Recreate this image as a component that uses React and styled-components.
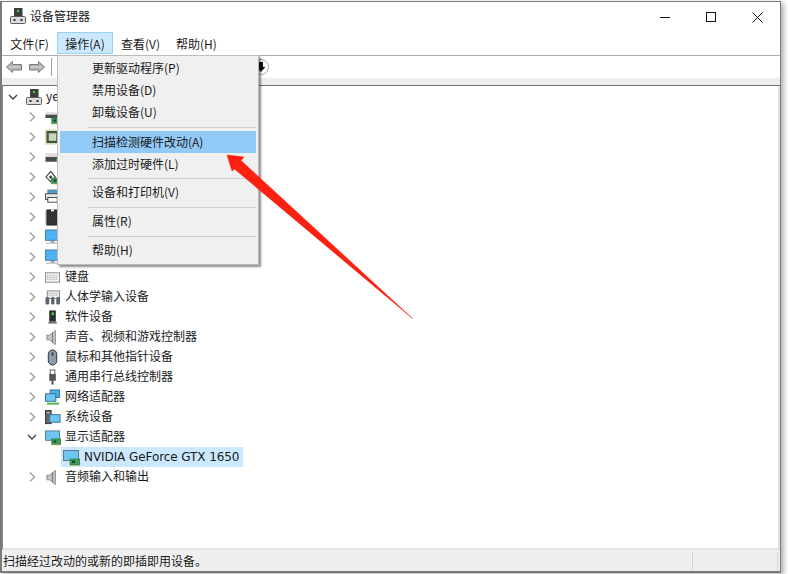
import React from 'react';
import styled, { createGlobalStyle } from 'styled-components';

const GlobalStyle = createGlobalStyle`
  html, body {
    margin: 0;
    background: #fff;
    overflow: hidden;
  }
  body {
    font-family: "Liberation Sans", "Noto Sans CJK SC", sans-serif;
    font-size: 12px;
    color: #1a1a1a;
  }
`;

const UI_FONT = `"Noto Sans CJK SC", "Liberation Sans", sans-serif`;

const TREE = [
  { icon: 'Scanner', label: '' },
  { icon: 'Chip', label: '' },
  { icon: 'Drive', label: '' },
  { icon: 'Sata', label: '' },
  { icon: 'Printer', label: '' },
  { icon: 'Mem', label: '' },
  { icon: 'Monitor', label: '' },
  { icon: 'Monitor', label: '' },
  { icon: 'Keyboard', label: '键盘' },
  { icon: 'Hid', label: '人体学输入设备' },
  { icon: 'Soft', label: '软件设备' },
  { icon: 'Speaker', label: '声音、视频和游戏控制器' },
  { icon: 'Mouse', label: '鼠标和其他指针设备' },
  { icon: 'Usb', label: '通用串行总线控制器' },
  { icon: 'Net', label: '网络适配器' },
  { icon: 'System', label: '系统设备' },
  { icon: 'Display', label: '显示适配器', open: true },
];

const Page = styled.div`
  width: 788px;
  height: 574px;
  background: #fff;
  padding-top: 1px;
  box-sizing: border-box;
`;

const Win = styled.div`
  width: 781px;
  height: 572px;
  box-sizing: border-box;
  border: 1px solid #7a7a7a;
  border-left-width: 2px;
  border-bottom-width: 2px;
  background: #fff;
  display: flex;
  flex-direction: column;
  position: relative;
  box-shadow: 3px 2px 5px rgba(0, 0, 0, 0.3);
`;

const TitleBar = styled.div`
  height: 30px;
  display: flex;
  align-items: center;
  padding-left: 8px;
  gap: 4px;
  font-family: ${UI_FONT};
  font-size: 12px;
  flex: none;
`;

const TitleIcon = styled.div`
  display: flex;
  margin-bottom: 2px;
`;

const TitleText = styled.span`
  flex: 1;
  padding-bottom: 3px;
`;

const Controls = styled.div`
  display: flex;
  align-items: center;
`;

const Control = styled.div`
  width: 46px;
  height: 30px;
  display: flex;
  align-items: center;
  justify-content: center;
`;

const MenuBar = styled.div`
  height: 23px;
  display: flex;
  align-items: flex-start;
  flex: none;
  border-bottom: 1px solid #ababab;
  font-family: ${UI_FONT};
  font-size: 12px;
`;

const MenuTitle = styled.div`
  width: ${(p) => p.$w}px;
  height: 22px;
  box-sizing: border-box;
  display: flex;
  align-items: center;
  justify-content: center;
  border: 1px solid ${(p) => (p.$active ? '#99d1f5' : 'transparent')};
  background: ${(p) => (p.$active ? '#cce8ff' : 'transparent')};
`;

const ToolBar = styled.div`
  height: 22px;
  display: flex;
  align-items: center;
  gap: 6px;
  padding-left: 4px;
  flex: none;
`;

const NavIcon = styled.svg`
  margin-left: ${(p) => (p.$flip ? 1 : 0)}px;
  transform: ${(p) => (p.$flip ? 'scaleX(-1)' : 'none')};
`;

const ToolSep = styled.div`
  width: 1px;
  height: 18px;
  background: #a0a0a0;
`;

const ToolHelp = styled.svg`
  margin-left: 195px;
`;

const Strip = styled.div`
  height: 7px;
  flex: none;
  background: #eeeeee;
  border-bottom: 1px solid #6f6f6f;
`;

const Body = styled.div`
  flex: 1;
  min-height: 0;
  padding: 1px 0 0 2px;
  border-right: 2px solid #e4e4e4;
  border-left: 1px solid #8a8a8a;
  border-bottom: 2px solid #e3e3e3;
  font-family: ${UI_FONT};
  font-size: 12px;
`;

const Row = styled.div`
  height: 20px;
  display: flex;
  align-items: center;
  padding-left: ${(p) => p.$indent}px;
`;

const RowLabel = styled.span`
  padding-bottom: 3px;
`;

const Twisty = styled.div`
  width: 16px;
  height: 16px;
  display: flex;
  align-items: center;
  justify-content: center;
  flex: none;
`;

const RowIcon = styled.div`
  width: 16px;
  height: 17px;
  display: flex;
  align-items: center;
  justify-content: center;
  margin: 0 4px 0 5px;
  flex: none;
`;

const SelectedRow = styled.div`
  display: flex;
  align-items: center;
  height: 20px;
  width: 182px;
  background: #cce8ff;
  padding-left: 2px;
  box-sizing: border-box;
  gap: 4px;
  font-family: "DejaVu Sans", sans-serif;
  font-size: 12px;
  letter-spacing: -0.08px;
`;

const StatusBar = styled.div`
  height: 21px;
  flex: none;
  background: #efefef;
  display: flex;
  align-items: center;
  padding-left: 1px;
  font-family: ${UI_FONT};
  font-size: 12px;
  position: relative;
`;

const StatusGrip = styled.div`
  position: absolute;
  top: 2px;
  bottom: 0;
  width: 1px;
  left: ${(p) => p.$x}px;
  background: #d6d6d6;
`;

const Menu = styled.div`
  position: absolute;
  left: 55px;
  top: 53px;
  width: 202px;
  height: 210px;
  box-sizing: border-box;
  background: #f0f0f0;
  border: 1px solid #bcbcbc;
  box-shadow: 2px 2px 2px rgba(0, 0, 0, 0.45);
  padding: 1px 2px;
  display: flex;
  flex-direction: column;
  font-family: ${UI_FONT};
  font-size: 12px;
  z-index: 2;
`;

const MenuItem = styled.div`
  height: 22px;
  box-sizing: border-box;
  flex: none;
  display: flex;
  align-items: center;
  padding: 0 0 2px 32px;
  background: ${(p) => (p.$hot ? '#91c9f7' : 'transparent')};
`;

const MenuSep = styled.div`
  height: 1px;
  flex: none;
  background: #d0d0d0;
  margin: ${(p) => p.$before}px 0 ${(p) => p.$after}px 28px;
`;

const Arrow = styled.svg`
  position: absolute;
  left: 223px;
  top: 151px;
  z-index: 3;
`;

const Chevron = ({ open }) => (
  <svg width="12" height="12" viewBox="0 0 12 12" fill="none">
    {open ? (
      <path d="M2 4l4 4 4-4" stroke="#444" strokeWidth="1.4" />
    ) : (
      <path d="M4 1.500l4.500 4.500-4.500 4.500" stroke="#a6a6a6" strokeWidth="1.6" />
    )}
  </svg>
);

const Computer = () => (
  <svg width="16" height="17" viewBox="0 0 16 17">
    <rect x="4" y="0" width="8.500" height="8" fill="#3d3d3d" />
    <rect x="7" y="2" width="2" height="2" fill="#3fd14a" />
    <rect x="0.500" y="8.500" width="15" height="7" rx="1" fill="#dcdcdc" stroke="#5f5f5f" />
    <rect x="3.500" y="11" width="2" height="2" fill="#333" />
    <rect x="10.500" y="11" width="2" height="2" fill="#333" />
  </svg>
);

const Nav = ({ flip }) => (
  <NavIcon $flip={flip} width="16" height="14" viewBox="0 0 16 14">
    <path d="M0.500 7L6.500 1.500V4.500H15.500V10H6.500V12.500z" fill="#b4b4b4" stroke="#7d7d7d" />
    <path d="M3 7h11" stroke="#d9d9d9" />
  </NavIcon>
);

const Board = () => (
  <>
    <rect x="7" y="9" width="10" height="6" fill="#3f9a5c" stroke="#1f6b3a" strokeWidth="0.5" />
    <rect x="9" y="10.500" width="3" height="2.500" fill="#174f2c" />
    <path d="M8 15.500h8" stroke="#e0b030" strokeDasharray="1 1" />
  </>
);

const MonitorShape = () => (
  <>
    <rect x="0.500" y="0.500" width="15" height="11" fill="#4db3f5" stroke="#4a7ea3" />
    <rect x="6" y="12" width="4" height="2" fill="#9a9a9a" />
    <rect x="1" y="14" width="14" height="1" fill="#a8a8a8" />
  </>
);

const icons = {
  Scanner: (
    <>
      <rect x="0.500" y="3" width="15" height="2.500" fill="#dedede" />
      <rect x="0.500" y="5.500" width="15" height="3.500" fill="#4a4a4a" />
      <Board />
    </>
  ),
  Chip: (
    <>
      <rect x="0.500" y="0.500" width="15" height="15" fill="none" stroke="#c9a23a" strokeDasharray="1 1" />
      <rect x="1.500" y="1.500" width="13" height="13" fill="#3a5a36" />
      <rect x="4" y="4" width="8" height="8" fill="#c5d6c5" />
    </>
  ),
  Drive: (
    <>
      <rect x="0.500" y="4" width="15" height="4" fill="#dcdcdc" />
      <rect x="0.500" y="8" width="15" height="5" fill="#4a4a4a" />
      <rect x="12" y="10" width="2" height="2" fill="#5fd35f" />
    </>
  ),
  Sata: (
    <>
      <path d="M1 8l5-6 5 6-5 5z" fill="#fff" stroke="#444" strokeWidth="1.200" />
      <path d="M4 8l2-2 2 2-2 2z" fill="#444" />
      <Board />
    </>
  ),
  Printer: (
    <>
      <rect x="3" y="0.500" width="10" height="4" fill="#4aa3d8" stroke="#555" strokeWidth="0.6" />
      <rect x="0.500" y="4.500" width="15" height="6" fill="#e8e8e8" stroke="#444" />
      <rect x="3" y="8.500" width="10" height="5" fill="#fff" stroke="#444" />
    </>
  ),
  Mem: (
    <>
      <rect x="2" y="0.500" width="12" height="16" fill="#333" stroke="#222" />
      <path d="M0.500 2v13M15.500 2v13" stroke="#999" strokeDasharray="1 1" />
      <rect x="6.500" y="0" width="3" height="2" fill="#fff" />
    </>
  ),
  Monitor: <MonitorShape />,
  Keyboard: (
    <>
      <rect x="0.500" y="3.500" width="15" height="10" fill="#f2f2f2" stroke="#8a8a8a" />
      <path d="M2 6.500h12M2 8.500h12M2 10.500h12" stroke="#9c9c9c" strokeDasharray="1 1" />
    </>
  ),
  Hid: (
    <>
      <rect x="2.500" y="1.500" width="13" height="8" fill="#eee" stroke="#888" />
      <path d="M4 4h10M4 6h10" stroke="#999" strokeDasharray="1 1" />
      <rect x="0.500" y="8" width="4" height="8" rx="1.500" fill="#5c6670" />
      <rect x="6.500" y="8" width="3.500" height="8" rx="1.500" fill="#5c6670" />
      <rect x="12" y="8" width="4" height="8" rx="1.500" fill="#5c6670" />
    </>
  ),
  Soft: (
    <>
      <rect x="4.500" y="1" width="7" height="12" fill="#2c2c2c" />
      <rect x="7" y="3" width="2.500" height="3" fill="#3fd14a" />
      <rect x="3.500" y="13" width="9" height="2" fill="#777" />
    </>
  ),
  Speaker: (
    <>
      <path d="M2 6h3l6-5v15l-6-5H2z" fill="#c4c4c4" stroke="#8a8a8a" />
      <path d="M8 3v11" stroke="#777" />
    </>
  ),
  Mouse: (
    <>
      <rect x="3.500" y="0.500" width="9" height="16" rx="4.500" fill="#8b9aa8" stroke="#2c2c2c" />
      <rect x="7" y="3" width="2" height="4" rx="1" fill="#3c4a58" />
    </>
  ),
  Usb: (
    <>
      <rect x="5.500" y="0.500" width="5" height="5" fill="#fff" stroke="#555" />
      <rect x="4.500" y="5" width="7" height="7" fill="#555" />
      <rect x="7" y="12" width="2" height="4" fill="#444" />
    </>
  ),
  Net: (
    <>
      <rect x="5.500" y="0.500" width="10" height="8" fill="#49b2e6" stroke="#3a6f96" />
      <rect x="0.500" y="4.500" width="11" height="8" fill="#6cc6ef" stroke="#3a6f96" />
      <path d="M2 15h13" stroke="#43b34b" strokeWidth="2" />
    </>
  ),
  System: (
    <>
      <rect x="0.500" y="1" width="6" height="14" fill="#666" stroke="#333" />
      <rect x="2" y="3" width="3" height="1" fill="#ddd" />
      <rect x="5" y="5.500" width="11" height="8" fill="#6cc6ef" stroke="#3a6f96" />
    </>
  ),
  Display: (
    <>
      <rect x="0.500" y="1.500" width="15" height="10" fill="#6cc6ef" stroke="#5a7f96" />
      <g transform="translate(0 1)">
        <Board />
      </g>
    </>
  ),
};

const DevIcon = ({ name }) => (
  <svg width="17" height="17" viewBox="0 0 17 17">
    {icons[name]}
  </svg>
);

export default function App() {
  return (
    <Page>
      <GlobalStyle />
      <Win>
        <TitleBar>
          <TitleIcon><Computer /></TitleIcon>
          <TitleText>设备管理器</TitleText>
          <Controls>
            <Control>
              <svg width="10" height="10"><path d="M0 5.500h10" stroke="#111" /></svg>
            </Control>
            <Control>
              <svg width="10" height="10"><rect x="0.500" y="0.500" width="9" height="9" fill="none" stroke="#111" /></svg>
            </Control>
            <Control>
              <svg width="11" height="11"><path d="M0.500 0.500l10 10M10.500 0.500l-10 10" stroke="#111" /></svg>
            </Control>
          </Controls>
        </TitleBar>
        <MenuBar>
          <MenuTitle $w={55}>文件(F)</MenuTitle>
          <MenuTitle $w={56} $active>操作(A)</MenuTitle>
          <MenuTitle $w={55}>查看(V)</MenuTitle>
          <MenuTitle $w={57}>帮助(H)</MenuTitle>
        </MenuBar>
        <ToolBar>
          <Nav />
          <Nav flip />
          <ToolSep />
          <ToolHelp width="16" height="16" viewBox="0 0 16 16">
            <circle cx="8" cy="8" r="7.500" fill="#fff" stroke="#a8a8a8" />
            <path d="M6 3h4v5h2.500L8 13 3.500 8H6z" fill="#111" />
          </ToolHelp>
        </ToolBar>
        <Strip />
        <Body>
          <Row $indent={0}>
            <Twisty><Chevron open /></Twisty>
            <RowIcon><Computer /></RowIcon>
            <RowLabel>ye</RowLabel>
          </Row>
          {TREE.map((item, i) => (
            <Row key={i} $indent={19}>
              <Twisty><Chevron open={item.open} /></Twisty>
              <RowIcon><DevIcon name={item.icon} /></RowIcon>
              <RowLabel>{item.label}</RowLabel>
            </Row>
          ))}
          <Row $indent={56}>
            <SelectedRow>
              <DevIcon name="Display" />
              <span>NVIDIA GeForce GTX 1650</span>
            </SelectedRow>
          </Row>
          <Row $indent={19}>
            <Twisty><Chevron /></Twisty>
            <RowIcon><DevIcon name="Speaker" /></RowIcon>
            <RowLabel>音频输入和输出</RowLabel>
          </Row>
        </Body>
        <StatusBar>
          扫描经过改动的或新的即插即用设备。
          <StatusGrip $x={690} />
          <StatusGrip $x={775} />
        </StatusBar>
        <Menu>
          <MenuItem>更新驱动程序(P)</MenuItem>
          <MenuItem>禁用设备(D)</MenuItem>
          <MenuItem>卸载设备(U)</MenuItem>
          <MenuSep $before={4} $after={3} />
          <MenuItem $hot>扫描检测硬件改动(A)</MenuItem>
          <MenuItem>添加过时硬件(L)</MenuItem>
          <MenuSep $before={3} $after={2} />
          <MenuItem>设备和打印机(V)</MenuItem>
          <MenuSep $before={4} $after={2} />
          <MenuItem>属性(R)</MenuItem>
          <MenuSep $before={4} $after={2} />
          <MenuItem>帮助(H)</MenuItem>
        </Menu>
        <Arrow width="190" height="170" viewBox="0 0 190 170">
          <path d="M2 2L19 4 16 7.500 187.500 165.500 9.500 16 7 18z" fill="#fb2010" stroke="#fb2010" strokeWidth="0.5" />
        </Arrow>
      </Win>
    </Page>
  );
}
